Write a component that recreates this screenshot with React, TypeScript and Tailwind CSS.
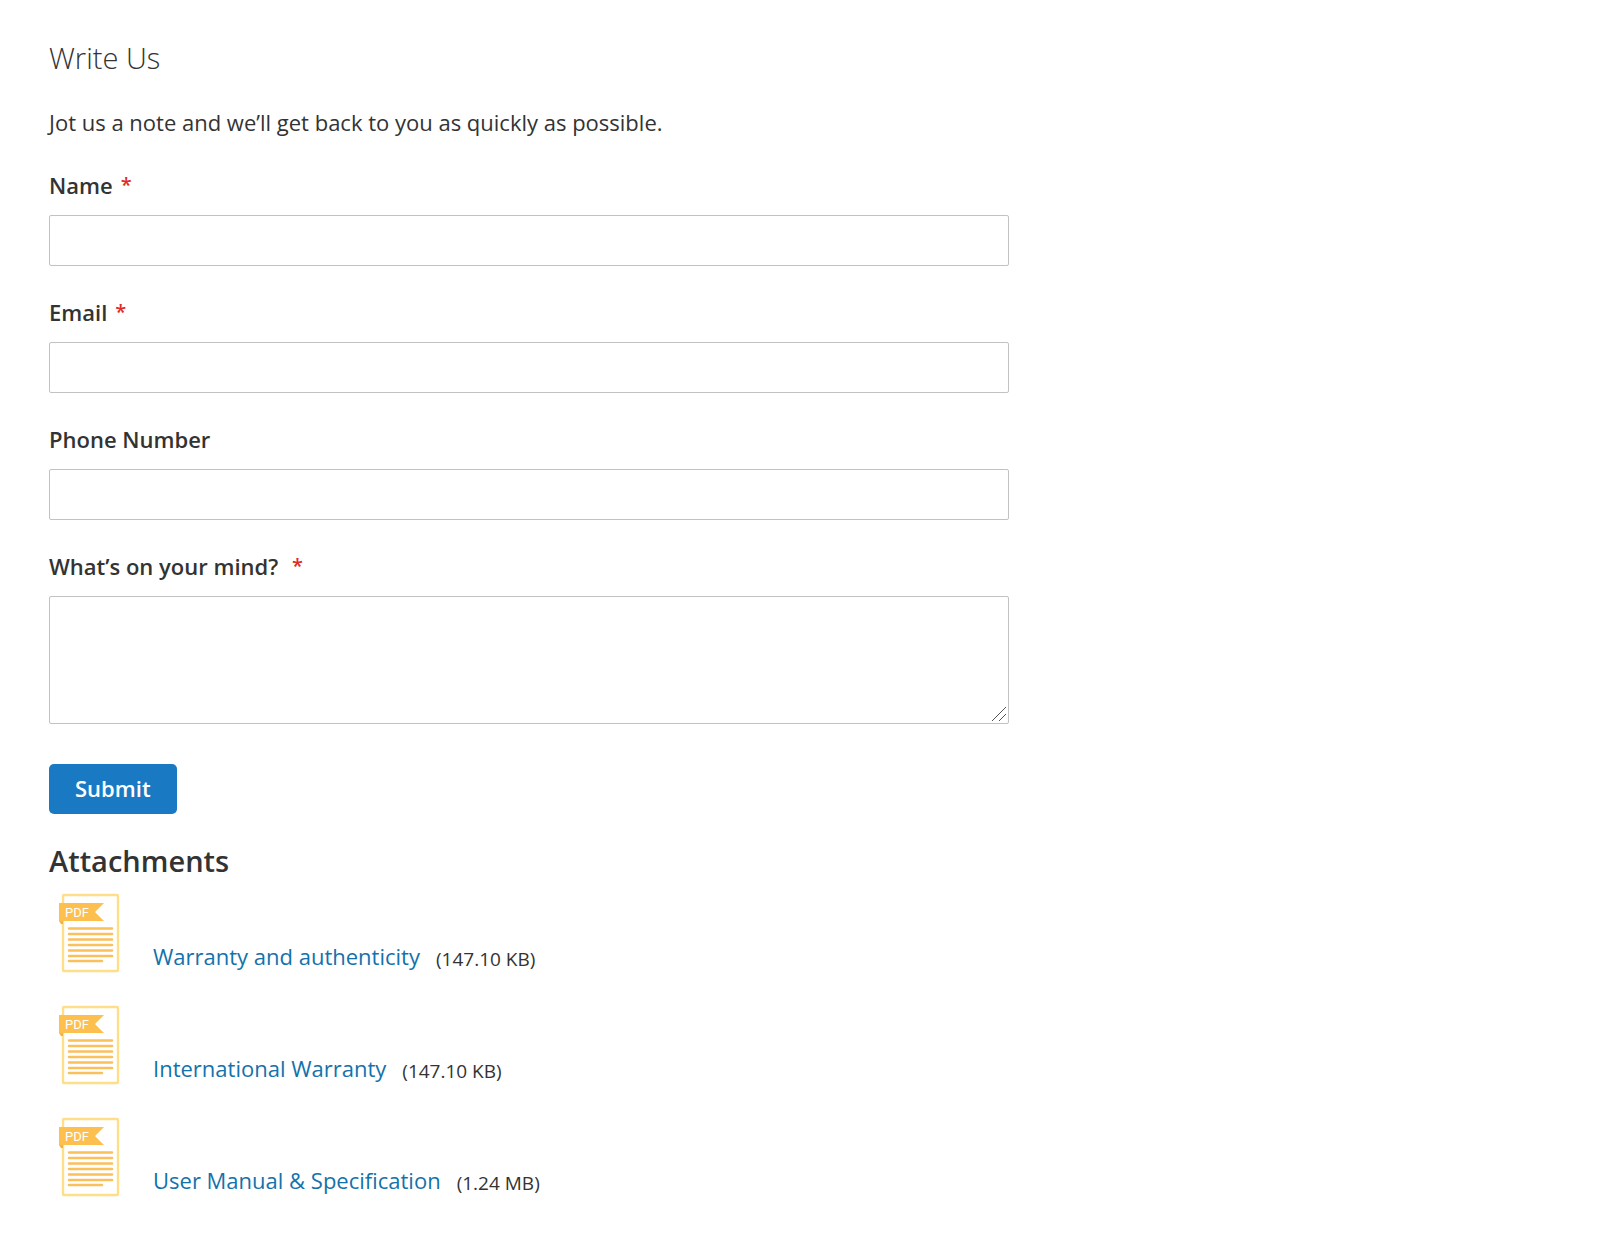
import type { ComponentProps } from "react";

const files = [
  { name: "Warranty and authenticity", size: "147.10 KB" },
  { name: "International Warranty", size: "147.10 KB" },
  { name: "User Manual & Specification", size: "1.24 MB" },
];

const control =
  "block w-full rounded-xs border border-[#c2c2c2] bg-white px-3 outline-none focus:border-[#006bb4]";

function Label({ id, text, required }: { id: string; text: string; required?: boolean }) {
  return (
    <label htmlFor={id} className="mb-[14px] flex gap-2 font-semibold">
      {text}
      {required && <span className="text-[20px] font-semibold text-[#e02b27]">*</span>}
    </label>
  );
}

function Field({
  id,
  label,
  required,
  ...props
}: { id: string; label: string } & ComponentProps<"input">) {
  return (
    <div>
      <Label id={id} text={label} required={required} />
      <input id={id} required={required} className={`${control} h-[51px]`} {...props} />
    </div>
  );
}

function PdfIcon() {
  return (
    <svg width="62" height="80" viewBox="0 0 62 80" aria-hidden="true">
      <rect x="4" y="2" width="55" height="76" rx="1" fill="#fff" stroke="#fedf88" strokeWidth="2.4" />
      <path d="M0 28h4v3H2z" fill="#f3b244" />
      <path d="M0 10h45l-9 9 9 9H0z" fill="#fdc04f" />
      <text x="6" y="24" fill="#fff" fontSize="13" fontFamily="Roboto, sans-serif">
        PDF
      </text>
      <path
        d="M10 35.500h43M10 41h43M10 46.500h43M10 52h43M10 57.500h43M10 63h43M10 68h33"
        stroke="#f9c05c"
        strokeWidth="2.5"
        strokeLinecap="round"
      />
    </svg>
  );
}

export default function App() {
  return (
    <main className="min-h-screen bg-white px-[49px] pt-[42px] pb-10 font-['Open_Sans','Noto_Sans',sans-serif] text-[22px] leading-8 text-[#333]">
      <form className="max-w-[960px]" onSubmit={(e) => e.preventDefault()}>
        <h2 className="text-[29px] leading-8 font-light">Write Us</h2>
        <p className="mt-8">Jot us a note and we’ll get back to you as quickly as possible.</p>

        <div className="mt-[31px] flex flex-col gap-[30px]">
          <Field id="name" label="Name" type="text" required />
          <Field id="email" label="Email" type="email" required />
          <Field id="telephone" label="Phone Number" type="tel" />
          <div>
            <Label id="comment" text={"What’s on your mind?\u00a0"} required />
            <div className="relative">
              <textarea id="comment" required className={`${control} h-32 resize-y py-2`} />
              <svg
                className="pointer-events-none absolute right-[2px] bottom-[2px] bg-white"
                width="16"
                height="16"
                viewBox="0 0 16 16"
                fill="none"
                stroke="#555"
                aria-hidden="true"
              >
                <path d="M1 15 15 1M8 15l7-7" />
              </svg>
            </div>
          </div>
        </div>

        <button
          type="submit"
          className="mt-10 block h-[50px] rounded-[5px] bg-[#1979c3] px-[26px] pb-[2px] font-semibold text-white hover:bg-[#006bb4]"
        >
          Submit
        </button>
      </form>

      <section className="mt-[27px]">
        <h3 className="text-[29px] leading-10 font-semibold">Attachments</h3>
        <ul className="mt-3 flex flex-col gap-8">
          {files.map((file) => (
            <li key={file.name} className="flex items-end pl-[10px]">
              <PdfIcon />
              <div className="ml-8 flex items-end gap-4">
                <a href="#" className="leading-[34px] text-[#1372ab] hover:underline">
                  {file.name}
                </a>
                <span className="text-[19px] leading-7">({file.size})</span>
              </div>
            </li>
          ))}
        </ul>
      </section>
    </main>
  );
}
